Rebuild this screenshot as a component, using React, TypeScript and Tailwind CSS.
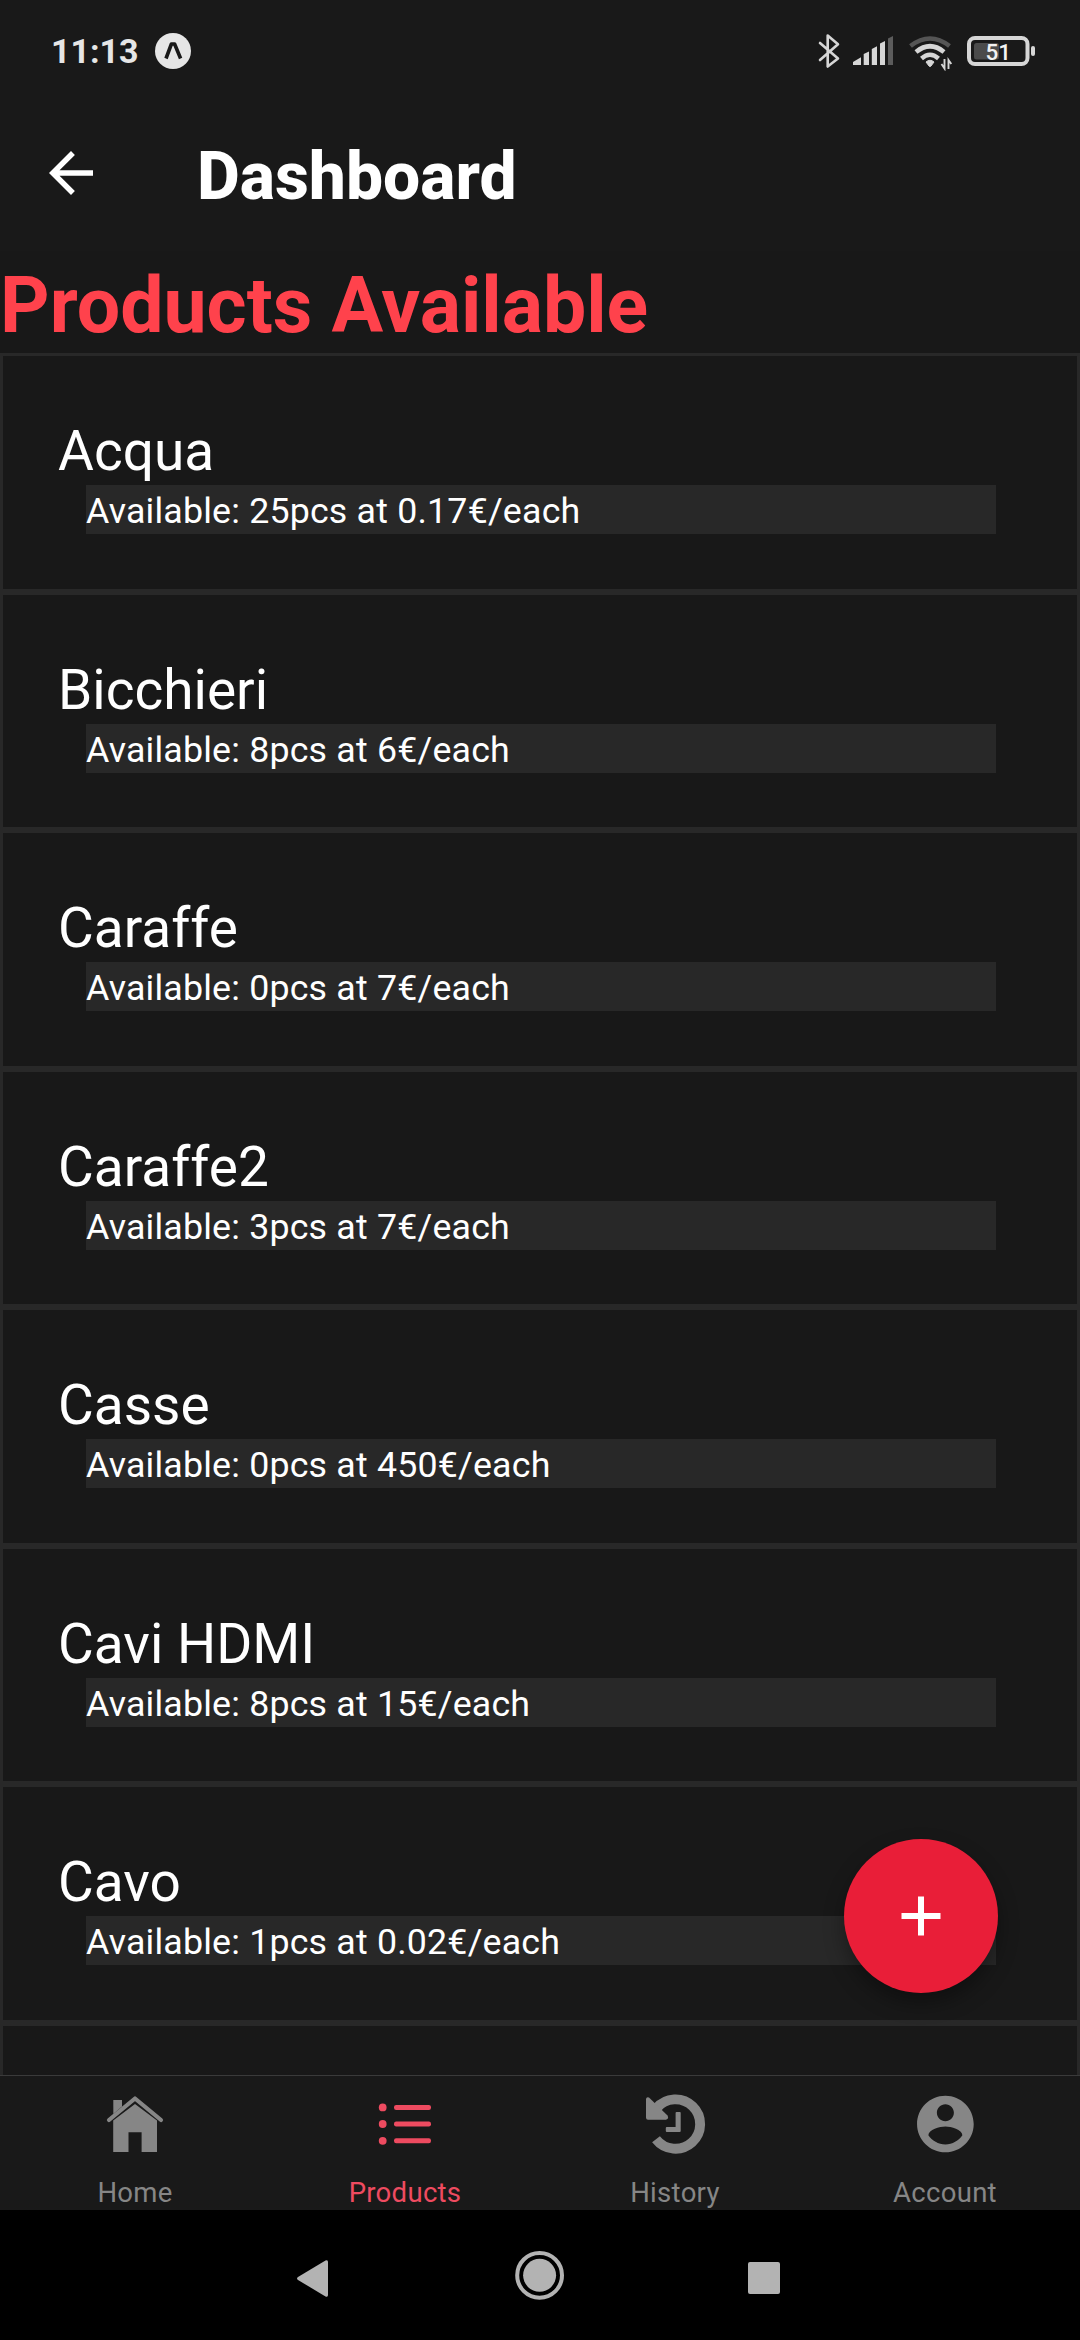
import React from "react";

const products = [
  { name: "Acqua", pcs: 25, price: "0.17" },
  { name: "Bicchieri", pcs: 8, price: "6" },
  { name: "Caraffe", pcs: 0, price: "7" },
  { name: "Caraffe2", pcs: 3, price: "7" },
  { name: "Casse", pcs: 0, price: "450" },
  { name: "Cavi HDMI", pcs: 8, price: "15" },
  { name: "Cavo", pcs: 1, price: "0.02" },
];

function StatusBar() {
  return (
    <div className="flex h-[102px] shrink-0 items-center pl-[51px] text-[#e6e6e6]">
      <span className="w-[104px] text-[34px] font-bold leading-none">11:13</span>
      <svg width="36" height="36" viewBox="0 0 36 36">
        <circle cx="18" cy="18" r="18" fill="#e6e6e6" />
        <path d="M11 25.5 L16.4 11 H19.6 L25.6 25.5" fill="none" stroke="#191919" strokeWidth="3.6" strokeLinejoin="round" />
      </svg>
      <svg className="ml-auto" width="264" height="40" viewBox="816 31 264 40">
        <path d="M820 43 L838 58.5 L827.7 66.5 V35.5 L838 44.2 L820 60" fill="none" stroke="#d6d6d6" strokeWidth="2.6" strokeLinecap="round" strokeLinejoin="round" />
        <path d="M853 65 V62 L861 57.3 V65Z M863.7 65 V54 L869 51.6 V65Z M871.8 65 V49 L877 46.3 V65Z M880 65 V43.5 L885 41 V65Z" fill="#d6d6d6" />
        <path d="M888 65 V38.5 L893 36 V65Z" fill="#5c5c5c" />
        <path d="M910.5 46 Q930 31 949.5 46" fill="none" stroke="#555555" strokeWidth="4.6" />
        <path d="M916 52 Q930 40.5 944 52" fill="none" stroke="#d6d6d6" strokeWidth="4.6" />
        <path d="M921.5 58.5 Q930 51 938.5 58.5" fill="none" stroke="#d6d6d6" strokeWidth="4.4" />
        <path d="M926 62 Q930 58.5 934 62 L931 66 Q930 67 929 66Z" fill="#d6d6d6" stroke="#d6d6d6" />
        <path d="M941.5 64 L944.5 68.5 V59 M948.5 69 V60 L951.3 64" fill="none" stroke="#d6d6d6" strokeWidth="1.9" />
        <rect x="969" y="38" width="58.5" height="26" rx="6" fill="none" stroke="#d6d6d6" strokeWidth="4" />
        <rect x="974" y="43" width="25" height="16.5" rx="2.5" fill="#4b4b4b" />
        <rect x="1031" y="46" width="4" height="10" rx="2" fill="#d6d6d6" />
        <text x="985.5" y="59.6" fontSize="22.5" fontWeight="500" fill="#f2f2f2">51</text>
      </svg>
    </div>
  );
}

function Header() {
  return (
    <header className="flex h-[149px] shrink-0 items-start pl-[38px]">
      <svg className="mt-[38px]" width="66" height="66" viewBox="0 0 24 24" fill="#fff">
        <path d="M20 11H7.83l5.59-5.59L12 4l-8 8 8 8 1.41-1.41L7.83 13H20v-2z" />
      </svg>
      <h1 className="ml-[93px] mt-[36px] text-[66px] font-extrabold leading-[77px] text-white">Dashboard</h1>
    </header>
  );
}

function ProductRow({ name, pcs, price }: { name: string; pcs: number; price: string }) {
  return (
    <li className="h-[238.57px] shrink-0 border-[3px] border-[#282828] bg-[#181818] pl-[55px] pr-[81px] pt-[63px]">
      <div className="text-[55px] leading-[64px] text-white">{name}</div>
      <div className="ml-[28px] mt-[2px] h-[49px] bg-[#282828] pt-[2px] text-[35.75px] leading-[49px] tracking-[0.19px] text-white">
        Available: {pcs}pcs at {price}€/each
      </div>
    </li>
  );
}

function HomeIcon() {
  return (
    <svg width="68" height="68" viewBox="101 2090 68 68" fill="currentColor">
      <path d="M109 2120 L135 2098.5 L161 2120" fill="none" stroke="currentColor" strokeWidth="4.2" strokeLinecap="round" strokeLinejoin="round" />
      <path d="M113.3 2100 H122 V2106.5 L113.3 2114Z" />
      <path d="M135 2104 L157 2120.5 V2152 H141.6 V2132.3 H128.5 V2152 H113.2 V2120.5Z" />
    </svg>
  );
}

function ListIcon() {
  return (
    <svg width="68" height="68" viewBox="371 2090 68 68" fill="currentColor">
      {[2107.4, 2124, 2140.8].map((y) => (
        <g key={y}>
          <circle cx="382.7" cy={y} r="3.9" />
          <rect x="394" y={y - 2.5} width="37" height="5" rx="2.2" />
        </g>
      ))}
    </svg>
  );
}

function HistoryIcon() {
  return (
    <svg width="68" height="68" viewBox="641 2090 68 68" fill="currentColor">
      <path d="M656.5 2108.2 A24.7 24.7 0 1 1 656 2139.3" fill="none" stroke="currentColor" strokeWidth="9.9" />
      <path d="M646 2099 Q646.5 2096.3 649 2097.5 L667.5 2115.6 Q669.3 2119 666 2119.7 H648 Q646 2119.7 646 2117.7Z" />
      <path d="M676.5 2112 H680 Q680.7 2112 680.7 2113 V2131 Q680.7 2132 679.7 2132 H666.8 Q665.8 2132 665.8 2131 V2128 Q665.8 2127 666.8 2127 H675.6 V2113 Q675.6 2112 676.5 2112Z" />
    </svg>
  );
}

function AccountIcon() {
  return (
    <svg width="68.75" height="68" viewBox="0 0 24 24" fill="currentColor">
      <path d="M12 2C6.48 2 2 6.48 2 12s4.48 10 10 10 10-4.48 10-10S17.52 2 12 2zm0 3c1.66 0 3 1.34 3 3s-1.34 3-3 3-3-1.34-3-3 1.34-3 3-3zm0 14.2c-2.5 0-4.71-1.28-6-3.22.03-1.99 4-3.08 6-3.08 1.99 0 5.97 1.09 6 3.08-1.29 1.94-3.5 3.22-6 3.22z" />
    </svg>
  );
}

function Tab({ label, active, children }: { label: string; active?: boolean; children: React.ReactNode }) {
  return (
    <div className={`flex flex-1 flex-col items-center pt-[14px] ${active ? "text-[#ee4b60]" : "text-[#868686]"}`}>
      {children}
      <span className="mt-[19px] text-[27.5px] leading-[32px] tracking-[0.3px]">{label}</span>
    </div>
  );
}

export default function App() {
  return (
    <div className="relative flex h-[2340px] w-[1080px] flex-col overflow-hidden bg-[#191919] font-['Roboto',sans-serif]">
      <StatusBar />
      <Header />
      <main className="flex min-h-0 flex-1 flex-col overflow-hidden bg-[#181818]">
        <h2 className="h-[102px] shrink-0 pt-[10px] text-[77px] font-bold leading-[90px] text-[#ff424c]">Products Available</h2>
        <ul className="flex min-h-0 flex-1 flex-col overflow-hidden">
          {products.map((p) => (
            <ProductRow key={p.name} {...p} />
          ))}
          <li className="h-[238.57px] shrink-0 border-[3px] border-[#282828]" />
        </ul>
      </main>
      <nav className="flex h-[135px] shrink-0 border-t border-[#3a3a3a]">
        <Tab label="Home"><HomeIcon /></Tab>
        <Tab label="Products" active><ListIcon /></Tab>
        <Tab label="History"><HistoryIcon /></Tab>
        <Tab label="Account"><AccountIcon /></Tab>
      </nav>
      <div className="h-[130px] shrink-0 bg-black">
        <svg width="1080" height="130" viewBox="0 2210 1080 130" fill="#b3b3b3">
          <path d="M298 2277 L325.5 2260.6 Q328 2259.5 328 2262 V2295 Q328 2297.5 325.5 2296.4 L298 2280 Q296 2278.5 298 2277Z" />
          <circle cx="539.6" cy="2275.3" r="22.4" fill="none" stroke="#b3b3b3" strokeWidth="4" />
          <circle cx="539.6" cy="2275.3" r="16.5" />
          <rect x="748" y="2262" width="32" height="32" rx="2" />
        </svg>
      </div>
      <button className="absolute left-[844px] top-[1839px] flex size-[154px] items-center justify-center rounded-full bg-[#e91e38] shadow-[0_10px_20px_rgba(0,0,0,0.35)]">
        <svg width="40" height="40" viewBox="0 0 40 40" fill="#fff">
          <path d="M17 0.5h6v16.5h16.5v6H23v16.5h-6V23H0.5v-6H17z" />
        </svg>
      </button>
    </div>
  );
}
